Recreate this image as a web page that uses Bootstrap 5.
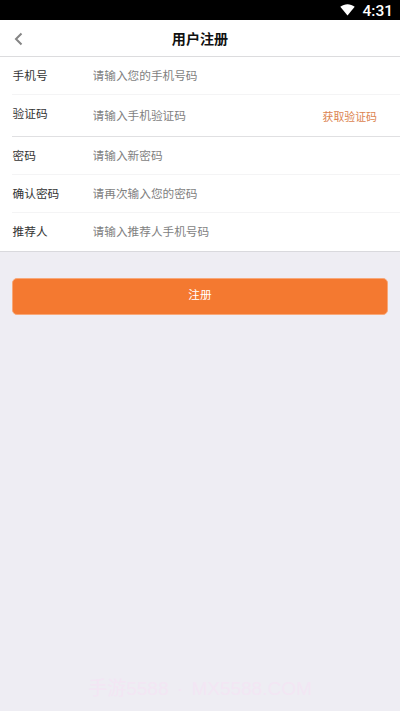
<!DOCTYPE html>
<html lang="zh-CN">
<head>
<meta charset="utf-8">
<meta name="viewport" content="width=device-width, initial-scale=1">
<title>用户注册</title>
<link href="https://cdn.jsdelivr.net/npm/bootstrap@5.3.0/dist/css/bootstrap.min.css" rel="stylesheet">
<style>
body{background:#eeedf3;font-family:"Noto Sans CJK SC",sans-serif;font-size:11.67px;line-height:18px;color:#333;height:711px;overflow:hidden}
.statusbar{height:20px;background:#000;font:500 15.5px/20px Roboto,sans-serif;padding-right:7px;gap:7px}
.statusbar span{position:relative;top:1px}
.titlebar{height:37px;border-bottom:1px solid #dcdcde;display:grid;grid-template-columns:40px 1fr 40px}
.titlebar h1{font-size:14.1px;font-weight:700;color:#111;line-height:20px;padding-bottom:1px}
.back{padding:2px 0 0 14px}
.form-line{height:38px;margin-left:12px;padding:0 0 2px .6px;border-bottom:1px solid #f4f4f5}
.form-line.tall{height:42px;border-color:#e0e0e2}
.form-line.last{border:0}
.form-line label{width:80px;flex:none}
.form-line input{font-size:11.67px;line-height:18px;min-width:0;color:#333}
.form-line input::placeholder{color:#7f7f7f;opacity:1}
.tall label{padding-bottom:4px}
.get-code{font-size:10.9px;line-height:18px;color:#dc8450;margin-right:23px;padding-top:3px!important}
.panel{border-bottom:1px solid #d9d9dd}
.submit{height:37px;margin:26px 12px 0;background:#f47930;border:1px solid #f8a878;border-radius:5px;font-size:11.67px;line-height:18px;color:#fff;padding:0 0 5px}
.site{color:#f3e6f4;font:19px/24px "Liberation Sans","Noto Sans CJK SC",sans-serif;word-spacing:3px;padding-bottom:10px}
</style>
</head>
<body class="d-flex flex-column">
<div class="statusbar d-flex justify-content-end align-items-center text-white">
<svg width="15" height="12" viewBox="0 0 15 12"><path d="M.3 2.8C4.5-.6 10.500-.6 14.700 2.800L7.500 11.500z" fill="#fff"/></svg>
<span>4:31</span>
</div>
<header class="titlebar bg-white align-items-center">
<a class="back d-flex" href="#" aria-label="返回"><svg width="9" height="14" viewBox="0 0 9 14"><path d="M7.500 1.500L2 7l5.500 5.500" fill="none" stroke="#858585" stroke-width="2"/></svg></a>
<h1 class="m-0 text-center">用户注册</h1>
</header>
<form class="d-flex flex-column flex-grow-1">
<div class="panel bg-white">
<div class="form-line d-flex align-items-center"><label for="phone">手机号</label><input id="phone" class="form-control-plaintext p-0" placeholder="请输入您的手机号码"></div>
<div class="form-line tall d-flex align-items-center"><label for="code">验证码</label><input id="code" class="form-control-plaintext p-0 flex-grow-1 w-auto" placeholder="请输入手机验证码"><button type="button" class="get-code btn border-0 p-0">获取验证码</button></div>
<div class="form-line d-flex align-items-center"><label for="pass">密码</label><input id="pass" class="form-control-plaintext p-0" placeholder="请输入新密码"></div>
<div class="form-line d-flex align-items-center"><label for="again">确认密码</label><input id="again" class="form-control-plaintext p-0" placeholder="请再次输入您的密码"></div>
<div class="form-line last d-flex align-items-center"><label for="referrer">推荐人</label><input id="referrer" class="form-control-plaintext p-0" placeholder="请输入推荐人手机号码"></div>
</div>
<button type="button" class="submit btn">注册</button>
<div class="site mt-auto text-center">手游5588 · MX5588.COM</div>
</form>
<script src="https://cdn.jsdelivr.net/npm/bootstrap@5.3.0/dist/js/bootstrap.bundle.min.js"></script>
</body>
</html>
